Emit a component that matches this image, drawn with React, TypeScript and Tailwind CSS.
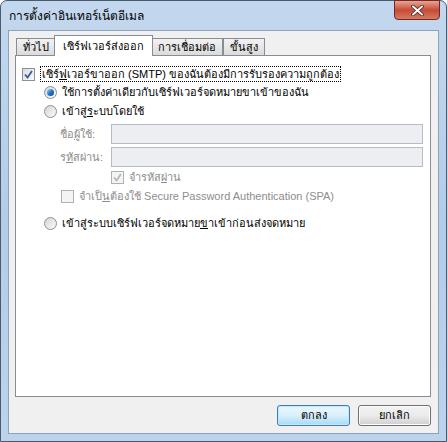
import React from 'react';

const font = { fontFamily: 'Tahoma, "Liberation Sans", "DejaVu Sans", sans-serif' };

const Check = ({ checked, disabled }: { checked?: boolean; disabled?: boolean }) => (
  <span
    className={`relative inline-flex h-[13px] w-[13px] shrink-0 items-center justify-center border ${
      disabled ? 'border-[#b1b1b1] bg-[#f4f4f4]' : 'border-[#8e8f8f] bg-gradient-to-br from-[#dcdcdc] to-[#fbfbfb]'
    }`}
  >
    {checked && (
      <svg width="9" height="9" viewBox="0 0 9 9">
        <path
          d="M1 4.5 L3.5 7.5 L8 1"
          fill="none"
          stroke={disabled ? '#b8b8b8' : '#3b5a9a'}
          strokeWidth="1.8"
        />
      </svg>
    )}
  </span>
);

const Radio = ({ checked }: { checked?: boolean }) => (
  <span className="relative inline-flex h-[13px] w-[13px] shrink-0 items-center justify-center rounded-full border border-[#8e8f8f] bg-gradient-to-br from-[#d6d6d6] to-[#fafafa]">
    {checked && (
      <span className="h-[7px] w-[7px] rounded-full bg-gradient-to-br from-[#9fd5f7] via-[#1e78c8] to-[#0b4a8c]" />
    )}
  </span>
);

const Tab = ({ label, active }: { label: string; active?: boolean }) => (
  <div
    className={`relative flex items-center border border-b-0 border-[#898c95] ${
      active
        ? 'z-10 -mx-[2px] -mb-px h-[21px] bg-white px-[8px]'
        : 'h-[17px] bg-gradient-to-b from-[#f2f2f2] to-[#dbdbdb] px-[6px]'
    }`}
  >
    <span className="text-[11px] leading-none text-black">{label}</span>
  </div>
);

export default function App() {
  return (
    <div className="h-[442px] w-[447px] bg-white" style={font}>
      <div className="relative flex h-full w-full flex-col rounded-t-[7px] border border-[#4b5b6e] bg-gradient-to-b from-[#c3d8ee] via-[#b3cce8] to-[#bcd3ec] px-[7px] pb-[7px]">
        {/* Title bar */}
        <div className="flex h-[29px] items-center pl-[1px]">
          <span className="text-[12px] text-black">การตั้งค่าอินเทอร์เน็ตอีเมล</span>
        </div>
        <button className="absolute right-[6px] top-[-1px] flex h-[20px] w-[46px] items-center justify-center rounded-b-[4px] border border-[#6d2a2a] bg-gradient-to-b from-[#e8a493] via-[#c74a36] to-[#d9785f]">
          <svg width="13" height="11" viewBox="0 0 13 11">
            <path d="M2 1.5 L11 9.5 M11 1.5 L2 9.5" stroke="#3a1a1a" strokeWidth="3.4" strokeLinecap="round" />
            <path d="M2 1.5 L11 9.5 M11 1.5 L2 9.5" stroke="#ffffff" strokeWidth="2" strokeLinecap="round" />
          </svg>
        </button>

        {/* Client */}
        <div className="flex flex-1 flex-col border border-[#8ca3bd] bg-[#f0f0f0] pl-[6px] pr-[7px] pt-[4px]">
          <div className="flex items-end pl-[1px]">
            <Tab label="ทั่วไป" />
            <Tab label="เซิร์ฟเวอร์ส่งออก" active />
            <Tab label="การเชื่อมต่อ" />
            <Tab label="ขั้นสูง" />
          </div>
          <div className="flex h-[342px] flex-col border border-[#898c95] bg-white pl-[6px] pt-[9px] text-[11px] text-black">
            <div className="flex h-[18px] items-center gap-[5px]">
              <Check checked />
              <span className="border border-dotted border-black px-[1px] leading-[14px]">
                เซิร์<u>ฟ</u>เวอร์ขาออก (SMTP) ของฉันต้องมีการรับรองความถูกต้อง
              </span>
            </div>
            <div className="flex h-[18px] items-center gap-[5px] pl-[22px]">
              <Radio checked />
              <span className="leading-[14px]">ใช้การตั้งค่าเดียวกับเซิร์ฟเวอร์จดหมายขาเข้าของฉัน</span>
            </div>
            <div className="mt-[1px] flex h-[18px] items-center gap-[5px] pl-[22px]">
              <Radio />
              <span className="leading-[14px]">
                เข้าสู่<u>ร</u>ะบบโดยใช้
              </span>
            </div>
            <div className="mt-[3px] flex h-[22px] items-center pl-[38px] pr-[7px] text-[#8d8d8d]">
              <span className="w-[51px]">ชื่อ<u>ผู้</u>ใช้:</span>
              <div className="h-[20px] flex-1 border border-[#b5bcc7] bg-[#eceef1]" />
            </div>
            <div className="mt-[1px] flex h-[22px] items-center pl-[38px] pr-[7px] text-[#8d8d8d]">
              <span className="w-[51px]">ร<u>หั</u>สผ่าน:</span>
              <div className="h-[20px] flex-1 border border-[#b5bcc7] bg-[#eceef1]" />
            </div>
            <div className="flex h-[18px] items-center gap-[5px] pl-[89px] text-[#8d8d8d]">
              <Check checked disabled />
              <span className="leading-[14px]">
                จำรหัส<u>ผ่</u>าน
              </span>
            </div>
            <div className="mt-[1px] flex h-[18px] items-center gap-[5px] pl-[39px] text-[#8d8d8d]">
              <Check disabled />
              <span className="leading-[14px]">
                จำเป็<u>น</u>ต้องใช้ Secure Password Authentication (SPA)
              </span>
            </div>
            <div className="mt-[9px] flex h-[18px] items-center gap-[5px] pl-[22px]">
              <Radio />
              <span className="leading-[14px]">
                เข้าสู่ระบบเซิร์ฟเวอร์จดหมาย<u>ข</u>าเข้าก่อนส่งจดหมาย
              </span>
            </div>
          </div>
          <div className="mt-[8px] flex justify-end gap-[8px]">
            <button className="flex h-[21px] w-[73px] items-center justify-center rounded-[3px] border border-[#3c7fb1] bg-gradient-to-b from-[#eaf6fd] via-[#d9f0fc] to-[#a7d9f5] text-[11px] text-black shadow-[inset_0_0_0_1px_#c5e6f8]">
              ตกลง
            </button>
            <button className="flex h-[21px] w-[73px] items-center justify-center rounded-[3px] border border-[#707070] bg-gradient-to-b from-[#f2f2f2] via-[#ebebeb] to-[#cfcfcf] text-[11px] text-black shadow-[inset_0_0_0_1px_#fcfcfc]">
              ยกเลิก
            </button>
          </div>
        </div>
      </div>
    </div>
  );
}
